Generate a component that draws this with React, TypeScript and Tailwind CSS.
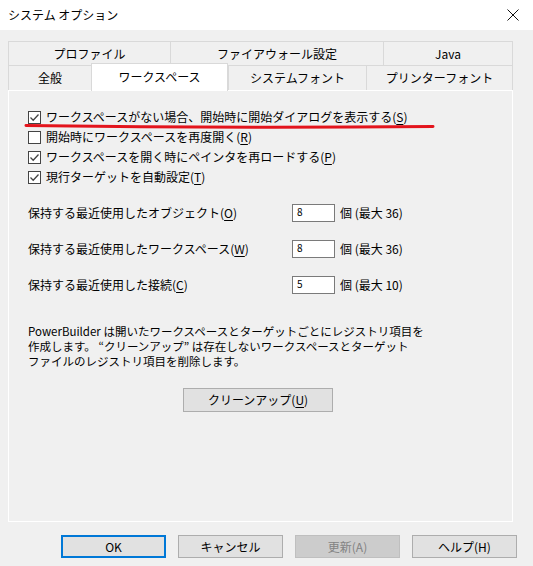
import React from 'react';

const FONT = "font-['Noto_Sans_CJK_JP',sans-serif]";

function CheckBox({ checked }: { checked: boolean }) {
  return (
    <span className="w-[13px] h-[13px] border border-[#444] bg-white flex items-center justify-center shrink-0">
      {checked && (
        <svg width="11" height="11" viewBox="0 0 11 11">
          <path d="M1.5 5.5 L4.2 8.2 L9.5 2.5" fill="none" stroke="#444" strokeWidth="1.3" />
        </svg>
      )}
    </span>
  );
}

function CheckRow({ checked, label, mnemonic }: { checked: boolean; label: string; mnemonic: string }) {
  return (
    <div className="flex items-center h-[20px] gap-[5px]">
      <CheckBox checked={checked} />
      <span className="whitespace-nowrap leading-none">
        {label}(<span className="underline underline-offset-2">{mnemonic}</span>)
      </span>
    </div>
  );
}

function CountRow({ label, mnemonic, value, max }: { label: string; mnemonic: string; value: string; max: string }) {
  return (
    <div className="flex items-center h-[18px]">
      <span className="w-[264px] whitespace-nowrap">
        {label}(<span className="underline underline-offset-2">{mnemonic}</span>)
      </span>
      <div className="w-[43px] h-[18px] border border-[#7a7a7a] bg-white text-[10px] leading-none pl-[4px] pt-[2px]">
        {value}
      </div>
      <span className="ml-[5px] whitespace-nowrap">個 (最大 {max})</span>
    </div>
  );
}

function Tab({ label, width, last }: { label: string; width: number; last?: boolean }) {
  return (
    <div
      className={`h-full flex items-center justify-center border-t border-l border-[#d9d9d9] ${last ? 'border-r' : ''}`}
      style={{ width }}
    >
      {label}
    </div>
  );
}

function DialogButton({ children, variant }: { children: React.ReactNode; variant?: 'default' | 'disabled' }) {
  const cls =
    variant === 'default'
      ? 'border-2 border-[#0078d7] bg-[#e1e1e1] text-black'
      : variant === 'disabled'
      ? 'border border-[#bfbfbf] bg-[#cccccc] text-[#838383]'
      : 'border border-[#adadad] bg-[#e1e1e1] text-black';
  return <div className={`w-[105px] h-[23px] flex items-center justify-center ${cls}`}>{children}</div>;
}

export default function App() {
  return (
    <div className={`relative w-[533px] h-[566px] bg-[#f0f0f0] text-[12px] text-black ${FONT}`}>
      {/* Title bar */}
      <div className="h-[30px] bg-white flex items-center justify-between pl-[8px] pr-[14px]">
        <span>システム オプション</span>
        <svg width="12" height="12" viewBox="0 0 12 12">
          <path d="M0.5 0.5 L11.5 11.5 M11.5 0.5 L0.5 11.5" stroke="#111" strokeWidth="1" />
        </svg>
      </div>

      <div className="px-[8px] pt-[11px]">
        {/* Tabs */}
        <div className="w-[505px]">
          <div className="flex h-[24px]">
            <Tab label="プロファイル" width={162} />
            <Tab label="ファイアウォール設定" width={213} />
            <Tab label="Java" width={130} last />
          </div>
          <div className="flex h-[25px]">
            <Tab label="全般" width={83} />
            <div className="relative z-10 w-[137px] h-[28px] -mt-[2px] bg-white border-t border-l border-r border-[#d9d9d9] flex items-center justify-center pb-[2px]">
              ワークスペース
            </div>
            <Tab label="システムフォント" width={138} />
            <Tab label="プリンターフォント" width={147} last />
          </div>
        </div>

        {/* Panel */}
        <div className="w-[505px] h-[432px] border border-white pl-[19px] pt-[16px]">
          <div className="flex flex-col">
            <CheckRow checked label="ワークスペースがない場合、開始時に開始ダイアログを表示する" mnemonic="S" />
            <CheckRow checked={false} label="開始時にワークスペースを再度開く" mnemonic="R" />
            <CheckRow checked label="ワークスペースを開く時にペインタを再ロードする" mnemonic="P" />
            <CheckRow checked label="現行ターゲットを自動設定" mnemonic="T" />
          </div>

          <div className="flex flex-col gap-[18px] mt-[17px]">
            <CountRow label="保持する最近使用したオブジェクト" mnemonic="O" value="8" max="36" />
            <CountRow label="保持する最近使用したワークスペース" mnemonic="W" value="8" max="36" />
            <CountRow label="保持する最近使用した接続" mnemonic="C" value="5" max="10" />
          </div>

          <div className="mt-[30px] text-[11.5px] leading-[15px] whitespace-nowrap">
            <div>PowerBuilder は開いたワークスペースとターゲットごとにレジストリ項目を</div>
            <div>作成します。 “クリーンアップ” は存在しないワークスペースとターゲット</div>
            <div>ファイルのレジストリ項目を削除します。</div>
          </div>

          <div className="ml-[155px] mt-[19px] w-[150px] h-[24px] border border-[#adadad] bg-[#e1e1e1] flex items-center justify-center">
            クリーンアップ(<span className="underline underline-offset-2">U</span>)
          </div>
        </div>
      </div>

      {/* Bottom buttons */}
      <div className="flex justify-end gap-[12px] pr-[16px] mt-[13px]">
        <DialogButton variant="default">OK</DialogButton>
        <DialogButton>キャンセル</DialogButton>
        <DialogButton variant="disabled">更新(A)</DialogButton>
        <DialogButton>ヘルプ(H)</DialogButton>
      </div>

      {/* Red annotation stroke */}
      <svg className="absolute left-0 top-0 pointer-events-none" width="533" height="566">
        <path d="M26 125.5 Q 230 128.5 433 126.5" fill="none" stroke="#e3141c" strokeWidth="3" strokeLinecap="round" />
      </svg>
    </div>
  );
}
